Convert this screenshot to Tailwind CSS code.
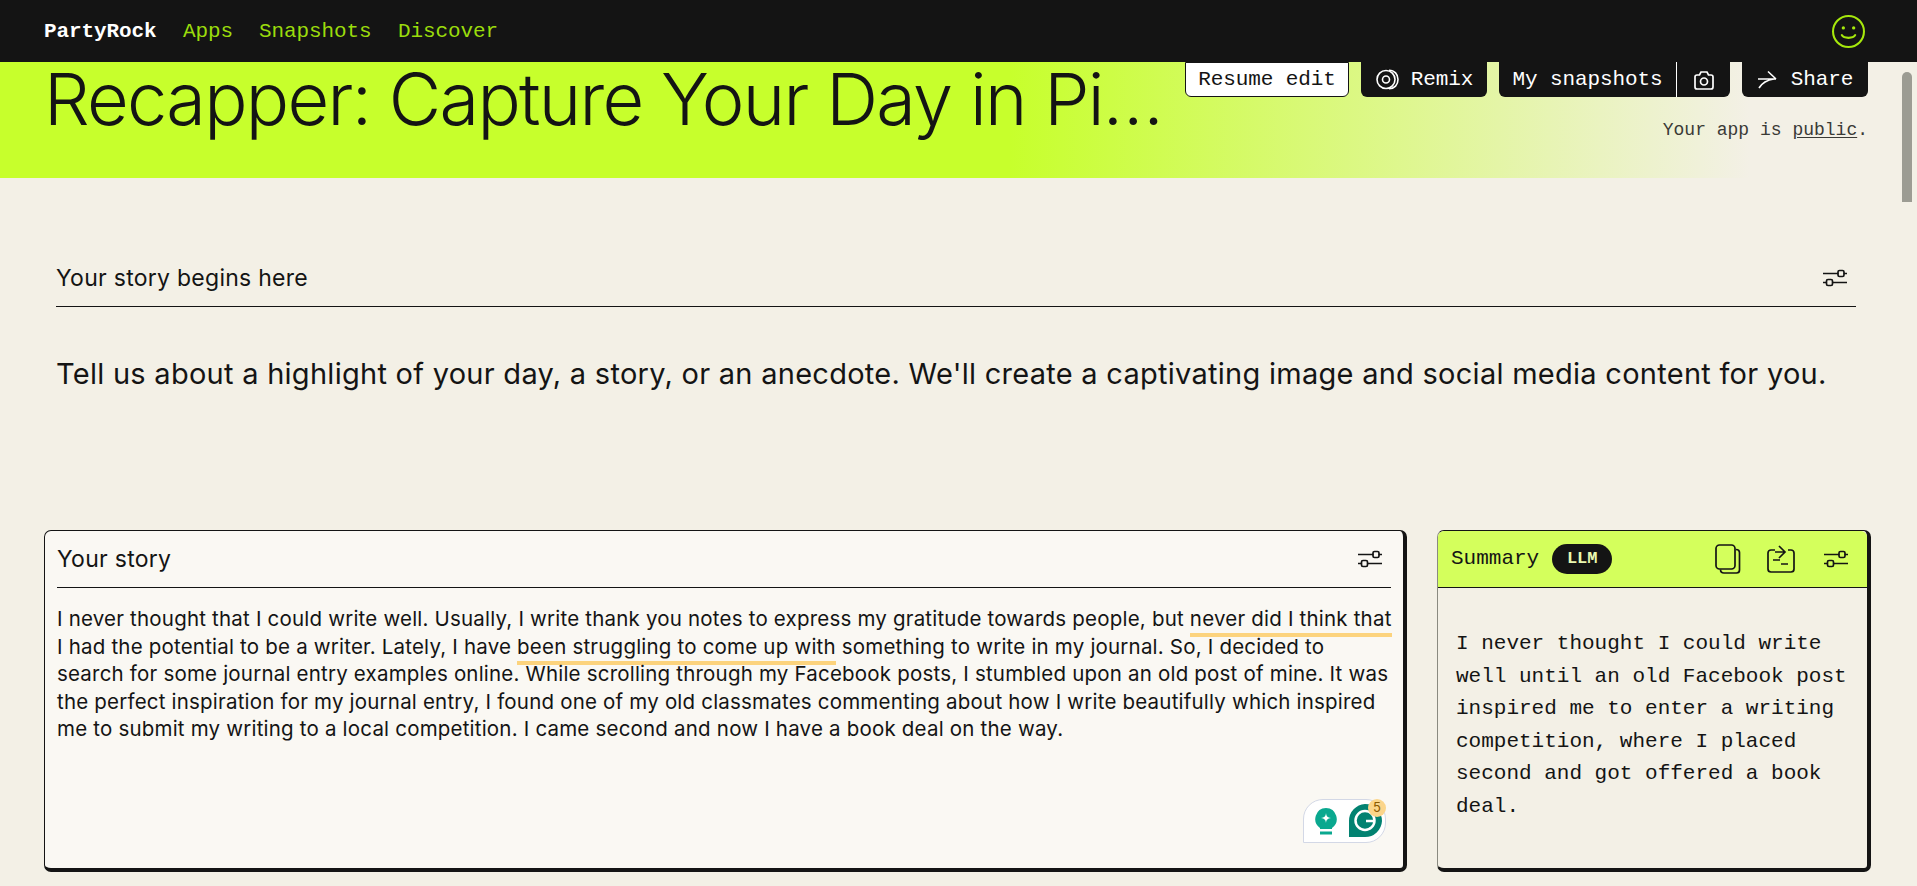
<!DOCTYPE html>
<html lang="en">
<head>
    <meta charset="UTF-8">
    <title>PartyRock</title>
    <script src="https://cdn.jsdelivr.net/npm/@tailwindcss/browser@4"></script>
</head>
<body class="h-[886px] overflow-hidden bg-[#f3f0e6] text-[#141414] font-['Inter',sans-serif]">
    <!-- top nav -->
    <nav class="h-[62px] pt-[2px] bg-[#141414] flex items-center justify-between pl-[44px] pr-[52px] font-['Liberation_Mono',monospace] text-[21px] tracking-[-0.1px] text-[#9bdc0c]">
        <div class="flex items-center">
            <span class="w-[139px] font-bold text-white">PartyRock</span>
            <a class="w-[76px]">Apps</a>
            <a class="w-[139px]">Snapshots</a>
            <a>Discover</a>
        </div>
        <svg class="w-[33px] h-[33px] -mt-[2px]" viewBox="0 0 32 32" fill="none" stroke="#a6e80c" stroke-width="2"><circle cx="16" cy="16" r="15"/><circle cx="11" cy="12.5" r="1.6" fill="#a6e80c" stroke="none"/><circle cx="21" cy="12.5" r="1.6" fill="#a6e80c" stroke="none"/><path d="M9.5 19.5c2 3.6 11 3.6 13 0" stroke-linecap="round"/></svg>
    </nav>

    <!-- hero -->
    <header class="h-[116px] flex justify-between pl-[44px] pr-[49px] bg-[linear-gradient(90deg,#c7ff2c_0,#c7ff2c_1010px,#f3f0e6_1750px)]">
        <h1 class="text-[72px] leading-[74px] font-light tracking-[-1.7px] whitespace-nowrap">Recapper: Capture Your Day in Pi…</h1>
        <div class="flex flex-col items-end font-['Liberation_Mono',monospace]">
            <div class="flex gap-[12px] h-[35px] text-[21px] tracking-[-0.1px]">
                <button class="w-[164px] bg-white border border-[#141414] rounded-b-[6px]">Resume edit</button>
                <button class="w-[126px] bg-[#141414] text-white rounded-b-[6px] flex items-center justify-center gap-[11px]">
                    <svg class="w-[25px] h-[25px]" viewBox="0 0 25 25" fill="none" stroke="white" stroke-width="1.6"><circle cx="11" cy="12.5" r="9"/><circle cx="11" cy="12.5" r="3.5"/><path d="M14 3.2c5.5 0 9 4 9 9.300s-3.500 9.300-9 9.300"/></svg>
                    Remix
                </button>
                <div class="w-[231px] bg-[#141414] text-white rounded-b-[6px] flex">
                    <span class="w-[178px] border-r border-white flex items-center justify-center">My snapshots</span>
                    <span class="flex-1 flex items-center justify-center">
                        <svg class="w-[24px] h-[24px]" viewBox="0 0 24 24" fill="none" stroke="white" stroke-width="1.7"><path d="M3 9a2 2 0 0 1 2-2h2.500l1.500-3h6l1.500 3H19a2 2 0 0 1 2 2v10a2 2 0 0 1-2 2H5a2 2 0 0 1-2-2z"/><circle cx="12" cy="13.500" r="3.500"/></svg>
                    </span>
                </div>
                <button class="w-[126px] bg-[#141414] text-white rounded-b-[6px] flex items-center justify-center gap-[12px]">
                    <svg class="w-[22px] h-[22px]" viewBox="0 0 22 22" fill="none" stroke="white" stroke-width="1.600"><path d="M1 10h18M11 2.500l8 7.500M2 19c3-5 8-8 15-9"/></svg>
                    Share
                </button>
            </div>
            <p class="mt-[20px] text-[18px] text-[#3a3a36]">Your app is <span class="underline underline-offset-2">public</span>.</p>
        </div>
    </header>

    <!-- intro -->
    <section class="mx-[56px] w-[1800px] pt-[82px]">
        <div class="h-[47px] pb-[10px] flex items-center justify-between border-b border-[#141414] text-[23px] tracking-[0.27px] pr-[8px]">
            <span>Your story begins here</span>
            <svg class="w-[26px] h-[20px]" viewBox="0 0 26 20" fill="none" stroke="#141414" stroke-width="1.700"><path d="M1 5.500h15.500M21.500 5.500H25M1 14.500h4M10.500 14.500H25"/><rect x="16" y="2.500" width="6" height="6" rx="1.500"/><rect x="4.500" y="11.500" width="6" height="6" rx="1.500"/></svg>
        </div>
        <p class="mt-[49px] text-[29px] leading-[36px] tracking-[0.27px] whitespace-nowrap">Tell us about a highlight of your day, a story, or an anecdote. We'll create a captivating image and social media content for you.</p>
    </section>

    <!-- cards -->
    <section class="flex gap-[30px] px-[44px] mt-[138px]">
        <article class="relative w-[1363px] h-[342px] bg-[#faf8f3] border border-[#141414] border-r-[4px] border-b-[4px] rounded-[7px] px-[12px]">
            <div class="h-[57px] flex items-center justify-between border-b border-[#141414] text-[23px] tracking-[0.27px] pr-[8px]">
                <span>Your story</span>
                <svg class="w-[26px] h-[20px]" viewBox="0 0 26 20" fill="none" stroke="#141414" stroke-width="1.700"><path d="M1 5.500h15.500M21.500 5.500H25M1 14.500h4M10.500 14.500H25"/><rect x="16" y="2.500" width="6" height="6" rx="1.500"/><rect x="4.500" y="11.500" width="6" height="6" rx="1.500"/></svg>
            </div>
            <p class="mt-[17px] text-[20.5px] leading-[27.500px] tracking-[0.2px] whitespace-nowrap">I never thought that I could write well. Usually, I write thank you notes to express my gratitude towards people, but <span class="pb-[2px] border-b-[4px] border-[#fcd37d]">never did I think that</span><br>I had the potential to be a writer. Lately, I have <span class="pb-[2px] border-b-[4px] border-[#fcd37d]">been struggling to come up with</span> something to write in my journal. So, I decided to<br>search for some journal entry examples online. While scrolling through my Facebook posts, I stumbled upon an old post of mine. It was<br>the perfect inspiration for my journal entry, I found one of my old classmates commenting about how I write beautifully which inspired<br>me to submit my writing to a local competition. I came second and now I have a book deal on the way.</p>
            <!-- grammarly widget -->
            <div class="absolute left-[1258px] top-[268px] w-[83px] h-[44px] bg-white border border-[#d3d8e6] rounded-[20px] rounded-bl-none flex items-center gap-[10px] pl-[10px]">
                <svg class="w-[24px] h-[29px]" viewBox="0 0 24 29"><path d="M12 1a11 11 0 0 1 6 20v1H6v-1A11 11 0 0 1 12 1z" fill="#0aa88f"/><path d="M12 6c.5 3.500 1.500 4.500 5 5-3.500.5-4.500 1.500-5 5-.5-3.500-1.500-4.500-5-5 3.500-.5 4.500-1.500 5-5z" fill="white"/><rect x="6" y="24.500" width="12" height="3" fill="#0aa88f"/></svg>
                <svg class="w-[34px] h-[34px]" viewBox="0 0 34 34"><path d="M17 0a17 17 0 0 1 17 17 17 17 0 0 1-17 16H1V17A17 17 0 0 1 17 0z" fill="#028271"/><circle cx="17" cy="16.500" r="9.500" fill="none" stroke="white" stroke-width="2.500"/><path d="M18 17h9" stroke="white" stroke-width="2.500"/></svg>
                <span class="absolute left-[64px] -top-[1px] w-[18px] h-[18px] rounded-full bg-[#fbd58a] text-[#8a5a00] text-[13px] flex items-center justify-center">5</span>
            </div>
        </article>

        <article class="w-[434px] h-[342px] border border-[#141414] border-l-[#8a8a80] border-r-[4px] border-b-[4px] border-r-[#141414] border-b-[#141414] rounded-[7px] font-['Liberation_Mono',monospace] text-[21px]">
            <div class="h-[57px] bg-[#d4ff5c] border-b border-[#141414] rounded-t-[6px] flex items-center pl-[13px] pr-[18px]">
                <span>Summary</span>
                <span class="ml-[13px] w-[60px] h-[30px] rounded-full bg-[#141414] text-[#eaf8b0] text-[17px] font-bold flex items-center justify-center">LLM</span>
                <svg class="ml-auto w-[26px] h-[30px]" viewBox="0 0 26 30" fill="none" stroke="#141414" stroke-width="1.700"><rect x="1" y="1" width="19" height="24" rx="3.500"/><path d="M21 5.500c2 0 3.500 1 3.500 3v17.500c0 2-1 3-3 3H9c-2 0-3.500-1-3.500-3.500"/></svg>
                <svg class="ml-[26px] w-[28px] h-[28px]" viewBox="0 0 28 28" fill="none" stroke="#141414" stroke-width="1.700"><path d="M8 5H4a3 3 0 0 0-3 3v16a3 3 0 0 0 3 3h20a3 3 0 0 0 3-3V8a3 3 0 0 0-3-3h-3M8 7h10M12 1l6 6-6 6M6 15h7M14 19h7"/></svg>
                <svg class="ml-[28px] w-[26px] h-[20px]" viewBox="0 0 26 20" fill="none" stroke="#141414" stroke-width="1.700"><path d="M1 5.500h15.500M21.500 5.500H25M1 14.500h4M10.500 14.500H25"/><rect x="16" y="2.500" width="6" height="6" rx="1.500"/><rect x="4.500" y="11.500" width="6" height="6" rx="1.500"/></svg>
            </div>
            <p class="mt-[40px] pl-[18px] leading-[32.500px] whitespace-nowrap">I never thought I could write<br>well until an old Facebook post<br>inspired me to enter a writing<br>competition, where I placed<br>second and got offered a book<br>deal.</p>
        </article>
    </section>

    <!-- scrollbar thumb -->
    <div class="absolute left-[1902px] top-[72px] w-[10px] h-[130px] rounded-t-[5px] bg-[#9c9c93]"></div>
</body>
</html>
